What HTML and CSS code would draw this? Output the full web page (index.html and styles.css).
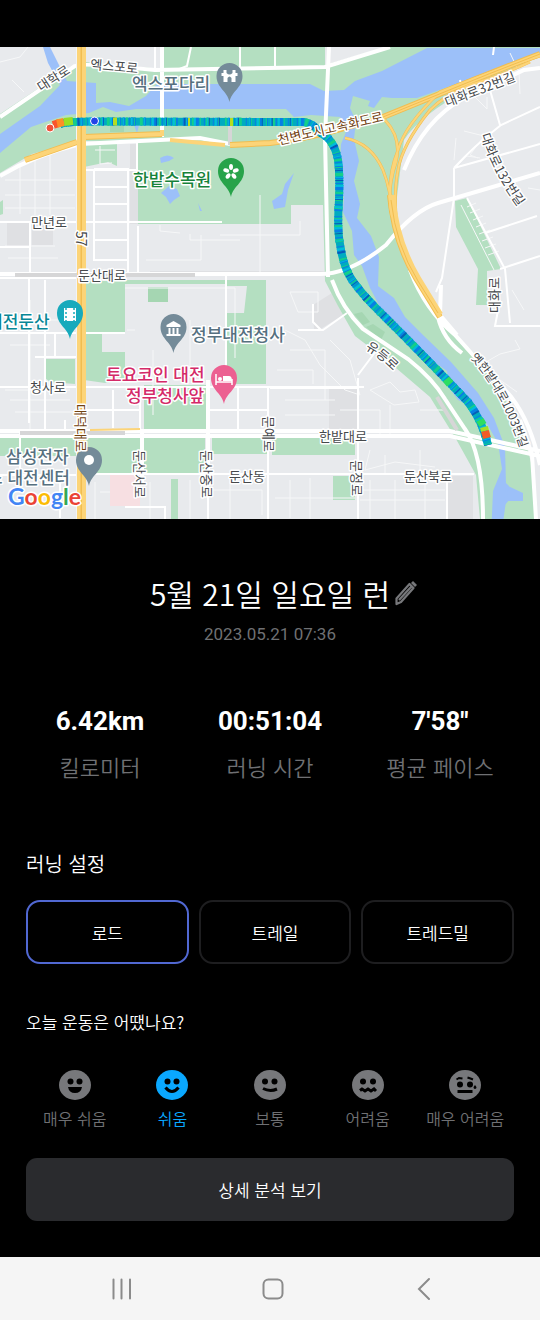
FILE: index.html
```html
<!DOCTYPE html>
<html lang="ko">
<head>
<meta charset="utf-8">
<meta name="viewport" content="width=device-width, initial-scale=1">
<title>5월 21일 일요일 런</title>
<link rel="stylesheet" href="styles.css">
</head>
<body>
<div class="status-bar"></div>
<main class="screen">
<svg class="map" viewBox="0 47 540 472" role="img" aria-label="러닝 경로 지도">
  <defs>
    <path id="route" d="M60 124 Q68 121.500 94 121.500 L304 122 Q314 124 318 131 L328 138 Q336 147 338 160 Q340 175 339 200 Q337 228 340 244 Q343 266 352 280 Q362 294 375 307 L404 336 L446 379 L468 402 Q482 420 488 445"/>
    <path id="pin" d="M0 20 C-2 9 -13 6 -13 -6 A13 13 0 0 1 13 -6 C13 6 2 9 0 20Z"/>
    <path id="curve-a" d="M481 135 Q490 170 522 212"/>
    <path id="curve-b" d="M470 358 Q502 390 524 460"/>
    <path id="curve-c" d="M365 349 Q380 357 398 376"/>
  </defs>
  <rect y="47" width="540" height="472" fill="#e8eaed"/>
  <g class="block">
    <path d="M7 223h22v23H7zM32 223h21v22H32zM313 305l19-12 11 22-24 15h-5zM329 388h29v47h-29zM447 476h26v43h-26zM130 144h8v80h-8zM150 276h176v-5H150z"/>
  </g>
  <g class="park">
    <path d="M0 114 72 66 85 62 162 69V47H325V65L386 47H540V56L470 88Q420 115 404 140 L396 205Q391 235 412 278L438 319 476 355 500 391 522 428 533 470 535 519H480L476 475 456 439 430 397 389 362 355 336 338 306 325 281 323 205H291V224H138V142L80 141 32 154 0 173Z"/>
    <path d="M84 144h33v22l-9-4-24 5zM0 202l3-2v14l-3 1z"/>
    <path d="M84 281h41v53h-23v18h23v28l-20 3-21-3zM125 280h141v104h-40v-71h18l3-27H125zM45 359h30v25l-25-2-5-4zM144 385h62v45h-62zM0 437h145v36H91l-11-17H0zM145 437h60v36h-60zM212 437h55v17h-55zM272 437h83v18h-83zM333 476h22v24h-22zM171 479h7v40h-7zM455 201l12-3 34 71-14 2v34h-11l2-36-22-42z"/>
  </g>
  <path fill="#e8eaed" d="M125 284h101v50h-101z"/>
  <path class="park-dark" d="M148 287h20v15h-20zM354 314l8-2 8 10-7 3zM366 327l7-3 12 8-4 8zM110 125h14v7h-14z"/>
  <path fill="#f7dfe2" d="M110 475h30v31h-30z"/>
  <g class="water">
    <path d="M43 47h7l10 20 7 14 29 2v20l14-1 19 4 17-10 11-12H310l14 7 20-1 11-9 27-10 45-23h113v5L502 67l-51 19-34 12-25 0 -10-1-8 11-6-2 2-5-17-5-3 12 6 13-2 18 5 22-5 20 6 23-3 14 14 18 8 21-1 29 16 12 11 19 18 18 28 27 27 31 16 25 11 29 1 38 17 8v8h-17l-5 36h-10l2-46 9-22-4-26-11-19-16-18-13-6-8-11-3-18-29-20-30-29-18-34-8-22-8-11-2-24-9-19 1-15-5-15 2-38 7-17-8-10-29-2-17 2-8-8H136l-20 3-13-5-14 6-23 2-35 12L0 153v-19l40-28 20-21-12-22z"/>
    <path d="M160 158q8-5 14 0l-5 3-8 2zM161 193l8-7 8 3 3 7-6 4-4 4-4-7zM294 173l-6 17-3 17-11 2-2-8 10-7 3-10zM198 203l4 8-2 0zM506 483l3 3-2 9 3 4-6 7zM134 125l5 0-2 8z"/>
  </g>
  <g class="minor">
    <path d="M0 62l20-5 8-10M12 80l12 12M20 164v50M35 160v55M50 155v60M5 180h70M5 195h70M5 208h70M30 238v40M8 258h50M5 246h50M146 260h55v-25M160 225v6l20 2M220 235h80v-14M260 195v80M190 234v6h50M100 146v18l12-1M95 150h20M30 300v130M10 320h65M10 345h40M5 390h65M10 400h60M15 412h60M45 310v70M125 288h110v70M153 350v65M135 330h-8M190 320v55M290 292h28v20h-20zM285 330l20 10 15 25 25 25 15 5M330 340l20 20 10 35M277 370h36v14M290 350h35v50M370 390l20-8 10 10 15-2 4 12-25 3zM340 410h40v25M390 405v30M420 410h25M285 400h50M285 415h50M370 450l-5 20 30-8 40 5M385 455v18M420 450v22M290 480v38M310 478v41M370 480v39M395 480v39M425 480v39M360 500h85M360 490h85M275 498h80M95 482v37M100 492h10M212 490h50v25M230 480v39M190 480v39M150 482v37M510 53l9 19 1 22M487 97v12l-12-12M455 168l12-12 13 2M454 160l2-22M464 131l20 5-14 19 8 3M515 340l5 9-20 5-14 8M500 380l17 12M512 290l12 20M540 190l-12-2"/>
    <path d="M461 205l33 65M467 207l9-4M470 213l10-4M473 220l10-4M476 227l10-4M479 234l11-4M482 241l11-4M485 248l11-4M488 255l11-4"/>
  </g>
  <g class="street">
    <path d="M0 222h222M0 247h30M138 226v50M30 222v52M94 169h35M128 171v103M137 141v29H84M94 169v91h34M94 187h34M94 204h34M94 222h34M94 240h34M0 278h80M29 278v145M45 280v150M55 333v24h22M0 333h125M35 357h42M226 276v107M65 435v-15M113 390v38M140 388v45M238 388v45M84 410h55M208 388v45M208 410h60M0 387h80M84 387h280M0 475h84M84 474h390M83 480v39M125 507h40v12M208 476v43M268 388v131M358 378v141M270 388h88M447 475v44M60 480v38M20 430v60"/>
    <path d="M155 47v23M191 47l-4 19-10 4M275 47v22M240 47v20M298 330h25l24-17M313 304v18l8 8M358 375l18-24M454 168v30l-12 80-6 14M454 168q20-22 47-43l39-18M500 125l-10-35M454 168l86-24M467 198l38 71 5 54M485 233l52-17M494 47l-1 8M500 269l40-13M500 300l-5 26h45M460 80l2 10"/>
  </g>
  <g class="road">
    <path d="M0 117 75 66q4-4 80 4L325 67 390 47M162 47v90M329 47l-4 90 3 140M0 176q35-21 80-32l120-6 30 6"/>
    <path d="M0 274h320q30 0 66-29 28-35 52-42l102-30M332 280q10 28 31 49l45 30q25 20 37 40l20 30q18 25 18 90"/>
    <path d="M0 431h450l90 20M0 436h450l90 20M208 380v94M142 430v54M540 68l-16 2-60 28q-40 22-60 72M410 270q15 40 45 65l45 50q28 25 40 80M438 317q5 22 24 36M441 285l-1 30 17 20M520 420l12 35 4 64"/>
  </g>
  <g class="casing">
    <path d="M79 47v472M83 47v472"/>
  </g>
  <path class="grey-road" d="M15 275h180M20 433h105M230 126v19M437 397l20 33"/>
  <g class="highway-edge">
    <path d="M81 47v472M84 137l78-3M25 160l52-18M230 145L270 143Q310 139 383 117L437 95Q490 73 540 54M390 195q4 46 26 83l24 39"/>
    <path class="thin" d="M345 138q26 5 38 32 8 20 9 45M385 120q17 18 11 42-10 30-4 55M540 56Q480 75 440 92 405 125 398 150 386 180 392 210M530 62Q500 76 470 85 445 95 430 110 402 145 398 170 394 190 396 215"/>
  </g>
  <g class="highway">
    <path d="M79 47v472M84 47v472M84 137l78-3v-4M25 160l52-18M170 140l55 5"/>
    <path d="M230 145L270 143Q310 139 383 117L437 95Q490 73 540 54M390 195q4 46 26 83l24 39M393 195q4 46 26 83l22 36"/>
    <path class="thin" d="M345 138q26 5 38 32 8 20 9 45M385 120q17 18 11 42-10 30-4 55M540 56Q480 75 440 92 405 125 398 150 386 180 392 210M530 62Q500 76 470 85 445 95 430 110 402 145 398 170 394 190 396 215M90 430l50-1"/>
    <path class="lane" d="M81 47v472M300 141Q340 134 383 117L437 95Q490 73 540 54M391 200q5 46 27 81l20 32"/>
  </g>
  <g class="run">
    <use href="#route" class="run-base"/>
    <use href="#route" class="run-a"/>
    <use href="#route" class="run-b"/>
    <use href="#route" class="run-c"/>
    <use href="#route" class="run-d"/>
    <path d="M53 125l6-2" stroke="#f8552d"/><path d="M57 123.500l7-1.500" stroke="#ff8d24"/><path d="M64 122l9-1" stroke="#99df22"/><path d="M113 121.500h4M188 122h2M230 122h3" stroke="#b5dd20"/>
    <path d="M446 379l4 5M480 420l3 5" stroke="#2ddd61"/><path d="M484 427l1 4" stroke="#a6df28"/><path d="M485 431l2 7" stroke="#f25b28"/>
  </g>
  <circle class="stop finish" cx="50" cy="128" r="4"/><circle class="stop start" cx="94.500" cy="121" r="4"/>

  <g transform="translate(229.500 82)"><use href="#pin" fill="#748b99"/><path d="M-8-10v3h2v6h4v-4q2-3 4 0v4h4v-6h2v-3H6v-3H3v3q-3 3-6 0v-3h-3v3z" fill="#fff" transform="translate(0 1)"/></g>
  <g transform="translate(231 177)"><use href="#pin" fill="#27a34a"/><g fill="#fff"><ellipse cy="-10" rx="2" ry="3"/><ellipse cy="-10" rx="2" ry="3" transform="rotate(72 0 -5)"/><ellipse cy="-10" rx="2" ry="3" transform="rotate(144 0 -5)"/><ellipse cy="-10" rx="2" ry="3" transform="rotate(216 0 -5)"/><ellipse cy="-10" rx="2" ry="3" transform="rotate(288 0 -5)"/></g></g>
  <g transform="translate(70 319)"><use href="#pin" fill="#17aabc"/><path d="M-6-11H6V2H-6z" fill="#fff"/><path d="M-4-11V2M4-11V2" stroke="#17aabc" stroke-width="1.500" stroke-dasharray="2 2"/></g>
  <g transform="translate(173.500 333)"><use href="#pin" fill="#748b99"/><path d="M-7-8 0-12 7-8v2H-7zM-5-5h2v6h-2zM-1-5h2v6h-2zM3-5h2v6H3zM-7 1H7v2H-7z" fill="#fff"/></g>
  <g transform="translate(224 384)"><use href="#pin" fill="#ec6091"/><path d="M-8-10v11M8-5v6M-8-2H8" fill="none" stroke="#fff" stroke-width="1.500"/><path d="M-1-8h6q3 0 3 5H-1z" fill="#fff"/><circle cx="-4" cy="-5" r="2" fill="#fff"/></g>
  <g transform="translate(89 466)"><use href="#pin" fill="#748b99"/><circle cy="-6" r="5" fill="#fff"/></g>

  <g class="poi slate">
    <text x="132" y="90">엑스포다리</text><text x="191" y="341">정부대전청사</text><text x="6" y="463">삼성전자</text><text x="-13" y="484">스 대전센터</text>
  </g>
  <text class="poi green" x="133" y="186">한밭수목원</text>
  <text class="poi teal" x="-13" y="328">대전둔산</text>
  <text class="poi pink" x="106" y="381">토요코인 대전</text><text class="poi pink" x="126" y="402">정부청사앞</text>
  <g class="street-name">
    <text transform="translate(41 92) rotate(-33)">대학로</text>
    <text transform="translate(90 69) rotate(5)">엑스포로</text>
    <text x="31" y="227">만년로</text><text x="78" y="280">둔산대로</text><text x="30" y="392">청사로</text>
    <text x="319" y="441">한밭대로</text><text x="229" y="481">둔산동</text><text x="404" y="481">둔산북로</text>
    <text transform="translate(135 450) rotate(90)">둔산서로</text><text transform="translate(202 450) rotate(90)">둔산중로</text>
    <text transform="translate(264 416) rotate(90)">문예로</text><text transform="translate(352 460) rotate(90)">문정로</text>
    <text transform="translate(499 313) rotate(-90)">대화로</text>
    <text transform="translate(447 107) rotate(-21)">대화로32번길</text>
    <text><textPath href="#curve-a">대화로132번길</textPath></text>
    <text class="long"><textPath href="#curve-b">옛한밭대로1003번길</textPath></text>
    <text><textPath href="#curve-c">유등로</textPath></text>
    <text class="number" transform="translate(76 231) rotate(90)">57</text>
    <text class="brown" transform="translate(76 404) rotate(90)">대덕대로</text>
    <text class="brown" transform="translate(279 145) rotate(-13)">천변도시고속화도로</text>
  </g>
  <text class="google" x="8" y="505"><tspan fill="#4285f4">G</tspan><tspan fill="#ea4335">o</tspan><tspan fill="#fbbc04">o</tspan><tspan fill="#4285f4">g</tspan><tspan fill="#34a853">l</tspan><tspan fill="#ea4335">e</tspan></text>
</svg>

<section class="summary">
  <header class="title-row">
    <h1>5월 21일 일요일 런</h1>
    <button class="edit" type="button" aria-label="제목 수정"><svg viewBox="0 0 24 26" width="24" height="26"><path d="M2.500 18.500 15.500 4l4 4L7 22l-4.500 2zM5 20 17 7" fill="none" stroke="#77787b" stroke-width="2.200" stroke-linejoin="round"/><path d="M17 3l2-2 4 4-2 2z" fill="#77787b"/></svg></button>
  </header>
  <time class="date" datetime="2023-05-21T07:36">2023.05.21 07:36</time>
  <dl class="stats">
    <div><dt>킬로미터</dt><dd>6.42km</dd></div>
    <div><dt>러닝 시간</dt><dd>00:51:04</dd></div>
    <div><dt>평균 페이스</dt><dd>7'58"</dd></div>
  </dl>
</section>

<form class="settings">
  <fieldset>
    <legend class="heading">러닝 설정</legend>
    <div class="surfaces">
      <label class="surface"><input type="radio" name="surface" checked><span>로드</span></label>
      <label class="surface"><input type="radio" name="surface"><span>트레일</span></label>
      <label class="surface"><input type="radio" name="surface"><span>트레드밀</span></label>
    </div>
  </fieldset>
  <fieldset class="feeling">
    <legend class="question">오늘 운동은 어땠나요?</legend>
    <div class="moods">
      <label class="mood"><input type="radio" name="mood"><svg viewBox="0 0 32 30"><ellipse cx="16" cy="15" rx="16" ry="15"/><g class="ink"><circle cx="11.500" cy="11.500" r="3"/><circle cx="20.500" cy="11.500" r="3"/><path d="M9 17h14q-1 6-7 6t-7-6z"/></g></svg><span>매우 쉬움</span></label>
      <label class="mood"><input type="radio" name="mood" checked><svg viewBox="0 0 32 30"><ellipse cx="16" cy="15" rx="16" ry="15"/><g class="ink"><circle cx="11.500" cy="11.500" r="3"/><circle cx="20.500" cy="11.500" r="3"/><path class="line" d="M9.500 17.500q6.500 8 13 0"/></g></svg><span>쉬움</span></label>
      <label class="mood"><input type="radio" name="mood"><svg viewBox="0 0 32 30"><ellipse cx="16" cy="15" rx="16" ry="15"/><g class="ink"><circle cx="11" cy="11.500" r="3"/><circle cx="20.500" cy="11.500" r="3"/><path class="line" d="M9 18.500q7 3.500 14 .500"/></g></svg><span>보통</span></label>
      <label class="mood"><input type="radio" name="mood"><svg viewBox="0 0 32 30"><ellipse cx="16" cy="15" rx="16" ry="15"/><g class="ink"><circle cx="11" cy="11.500" r="3"/><circle cx="21" cy="11.500" r="3"/><path class="line" d="M8 20.500l2-1.500 3 2 3-2 3 2 3-2 2 2"/></g></svg><span>어려움</span></label>
      <label class="mood"><input type="radio" name="mood"><svg viewBox="0 0 32 30"><ellipse cx="16" cy="15" rx="16" ry="15"/><g class="ink"><circle cx="11" cy="14.500" r="3"/><circle cx="21" cy="14.500" r="3"/><path class="brow" d="M7.500 9.500l2.500-1.500 3.500.500M18.500 7.500l3 1 2.500 1"/><path d="M8.500 20h15v3h-15zM26 15q3 3 0 4-3-1 0-4z"/></g></svg><span>매우 어려움</span></label>
    </div>
  </fieldset>
  <button class="details" type="button">상세 분석 보기</button>
</form>
</main>
<nav class="system-nav" aria-label="시스템 탐색">
  <button type="button" aria-label="최근 앱"><svg viewBox="0 0 24 24"><path d="M3.500 2.500v19M11.500 2.500v19M20 2.500v19"/></svg></button>
  <button type="button" aria-label="홈"><svg viewBox="0 0 24 24"><rect x="2.500" y="2.500" width="19" height="19" rx="5"/></svg></button>
  <button type="button" aria-label="뒤로"><svg viewBox="0 0 24 24"><path d="M17 2 7 12l10 10"/></svg></button>
</nav>
</body>
</html>
```
FILE: styles.css
```css
* { box-sizing: border-box; }
body {
  margin: 0;
  min-height: 100vh;
  display: flex;
  flex-direction: column;
  background: #000;
  color: #fff;
  font-family: "Noto Sans CJK KR", sans-serif;
  font-weight: 350;
}
button { font: inherit; color: inherit; border: 0; background: none; padding: 0; cursor: pointer; }
.status-bar { height: 47px; }
.screen { flex: 1; }

.map { display: block; width: 100%; height: auto; }
.block { fill: #dfe0e3; }
.park { fill: #b4dfc1; }
.park-dark { fill: #a5d6b2; }
.water { fill: #9cc0f9; }
.minor, .street, .road, .highway, .highway-edge, .casing, .grey-road, .run { fill: none; }
.minor { stroke: #f6f7f8; stroke-width: 1; }
.street { stroke: #fff; stroke-width: 2; }
.road { stroke: #fff; stroke-width: 4; }
.casing { stroke: #f3f4f5; stroke-width: 6; }
.grey-road { stroke: #d6d6d7; stroke-width: 4; }
.highway-edge { stroke: #f1bd50; stroke-width: 6; }
.highway-edge .thin { stroke-width: 3; }
.highway { stroke: #fcd478; stroke-width: 4; }
.highway .thin { stroke-width: 2; }
.highway .lane { stroke: #f1bd50; stroke-width: 1; }
.run { stroke-width: 8; }
.run-base { stroke: #00abc0; }
.run-a { stroke: #087ee4; stroke-dasharray: 2 4 1 3 3 5 1 2; }
.run-b { stroke: #14cf89; stroke-dasharray: 2 6 1 5 3 9 1 6; }
.run-c { stroke: #055bbb; stroke-dasharray: 1 17 2 23 1 9; }
.run-d { stroke: #00bcdd; stroke-dasharray: 1 7 2 11; }
.stop { stroke: #fff; stroke-width: 1; }
.finish { fill: #f0533a; }
.start { fill: #2443e8; }

.poi, .street-name, .google {
  font-family: "Noto Sans CJK KR", sans-serif;
  paint-order: stroke;
  stroke: #fff;
  stroke-width: 3px;
  stroke-linejoin: round;
}
.poi { font-size: 17px; font-weight: 500; }
.street-name { font-size: 13px; font-weight: 400; fill: #45484b; }
.slate { fill: #56707f; }
.green { fill: #16823a; }
.teal { fill: #078797; }
.pink { fill: #d42a68; }
.brown { fill: #71410f; }
.number { font-size: 14px; }
.long { font-size: 12px; }
.google { font-family: Lato, sans-serif; font-size: 23px; font-weight: 700; }

.summary { padding: 52px 26px 0; text-align: center; }
.title-row { display: grid; grid-template-columns: 1fr auto 1fr; align-items: center; column-gap: 4px; }
h1 { grid-column: 2; margin: 0; font-size: 30px; line-height: 44px; font-weight: 350; }
.edit { justify-self: start; display: flex; }
.date { display: block; margin-top: 8px; color: #6f7073; font: 400 17px/22px Roboto, sans-serif; }
.stats { display: grid; grid-template-columns: 148fr 192fr 148fr; margin: 52px 0 0; }
.stats div { display: flex; flex-direction: column-reverse; align-items: center; }
dt { color: #6f7073; font-size: 22px; line-height: 32px; margin-top: 5px; white-space: nowrap; }
dd { margin: 0; font: 700 26px/48px Roboto, sans-serif; }

.settings { padding: 0 26px 36px; margin-top: 66px; }
fieldset { border: 0; margin: 0; padding: 0; min-width: 0; }
legend { padding: 0; }
input { position: absolute; opacity: 0; pointer-events: none; }
.heading { font-size: 20px; line-height: 32px; }
.surfaces { display: grid; grid-template-columns: 162fr 152fr 152fr; gap: 10px; margin-top: 20px; }
.surface span {
  display: flex;
  align-items: center;
  justify-content: center;
  height: 64px;
  border: 2px solid #1e1e20;
  border-radius: 14px;
  font-size: 17px;
}
.surface input:checked + span { border-color: #5168d2; }
.feeling { margin-top: 44px; }
.question { font-size: 17px; line-height: 28px; }
.moods { display: grid; grid-template-columns: repeat(5, 1fr); margin-top: 34px; }
.mood { display: flex; flex-direction: column; align-items: center; color: #77787b; font-size: 16px; line-height: 24px; white-space: nowrap; }
.mood svg { width: 32px; height: 30px; fill: currentColor; margin-bottom: 6px; }
.mood span { color: #6f7073; }
.ink { fill: #000; }
.ink .line { fill: none; stroke: #000; stroke-width: 3; }
.ink .brow { fill: none; stroke: #000; stroke-width: 2; }
.mood input:checked ~ svg, .mood input:checked ~ span { color: #0aa8ff; }
.details { display: block; width: 100%; height: 63px; margin-top: 28px; border-radius: 11px; background: #2a2b2e; font-size: 17px; }

.system-nav { display: grid; grid-template-columns: repeat(3, 1fr); height: 63px; padding: 0 40px 0 46px; background: #f5f5f5; }
.system-nav button { display: grid; place-items: center; }
.system-nav svg { width: 24px; height: 24px; fill: none; stroke: #8b8b8b; stroke-width: 2; stroke-linecap: round; }
```
